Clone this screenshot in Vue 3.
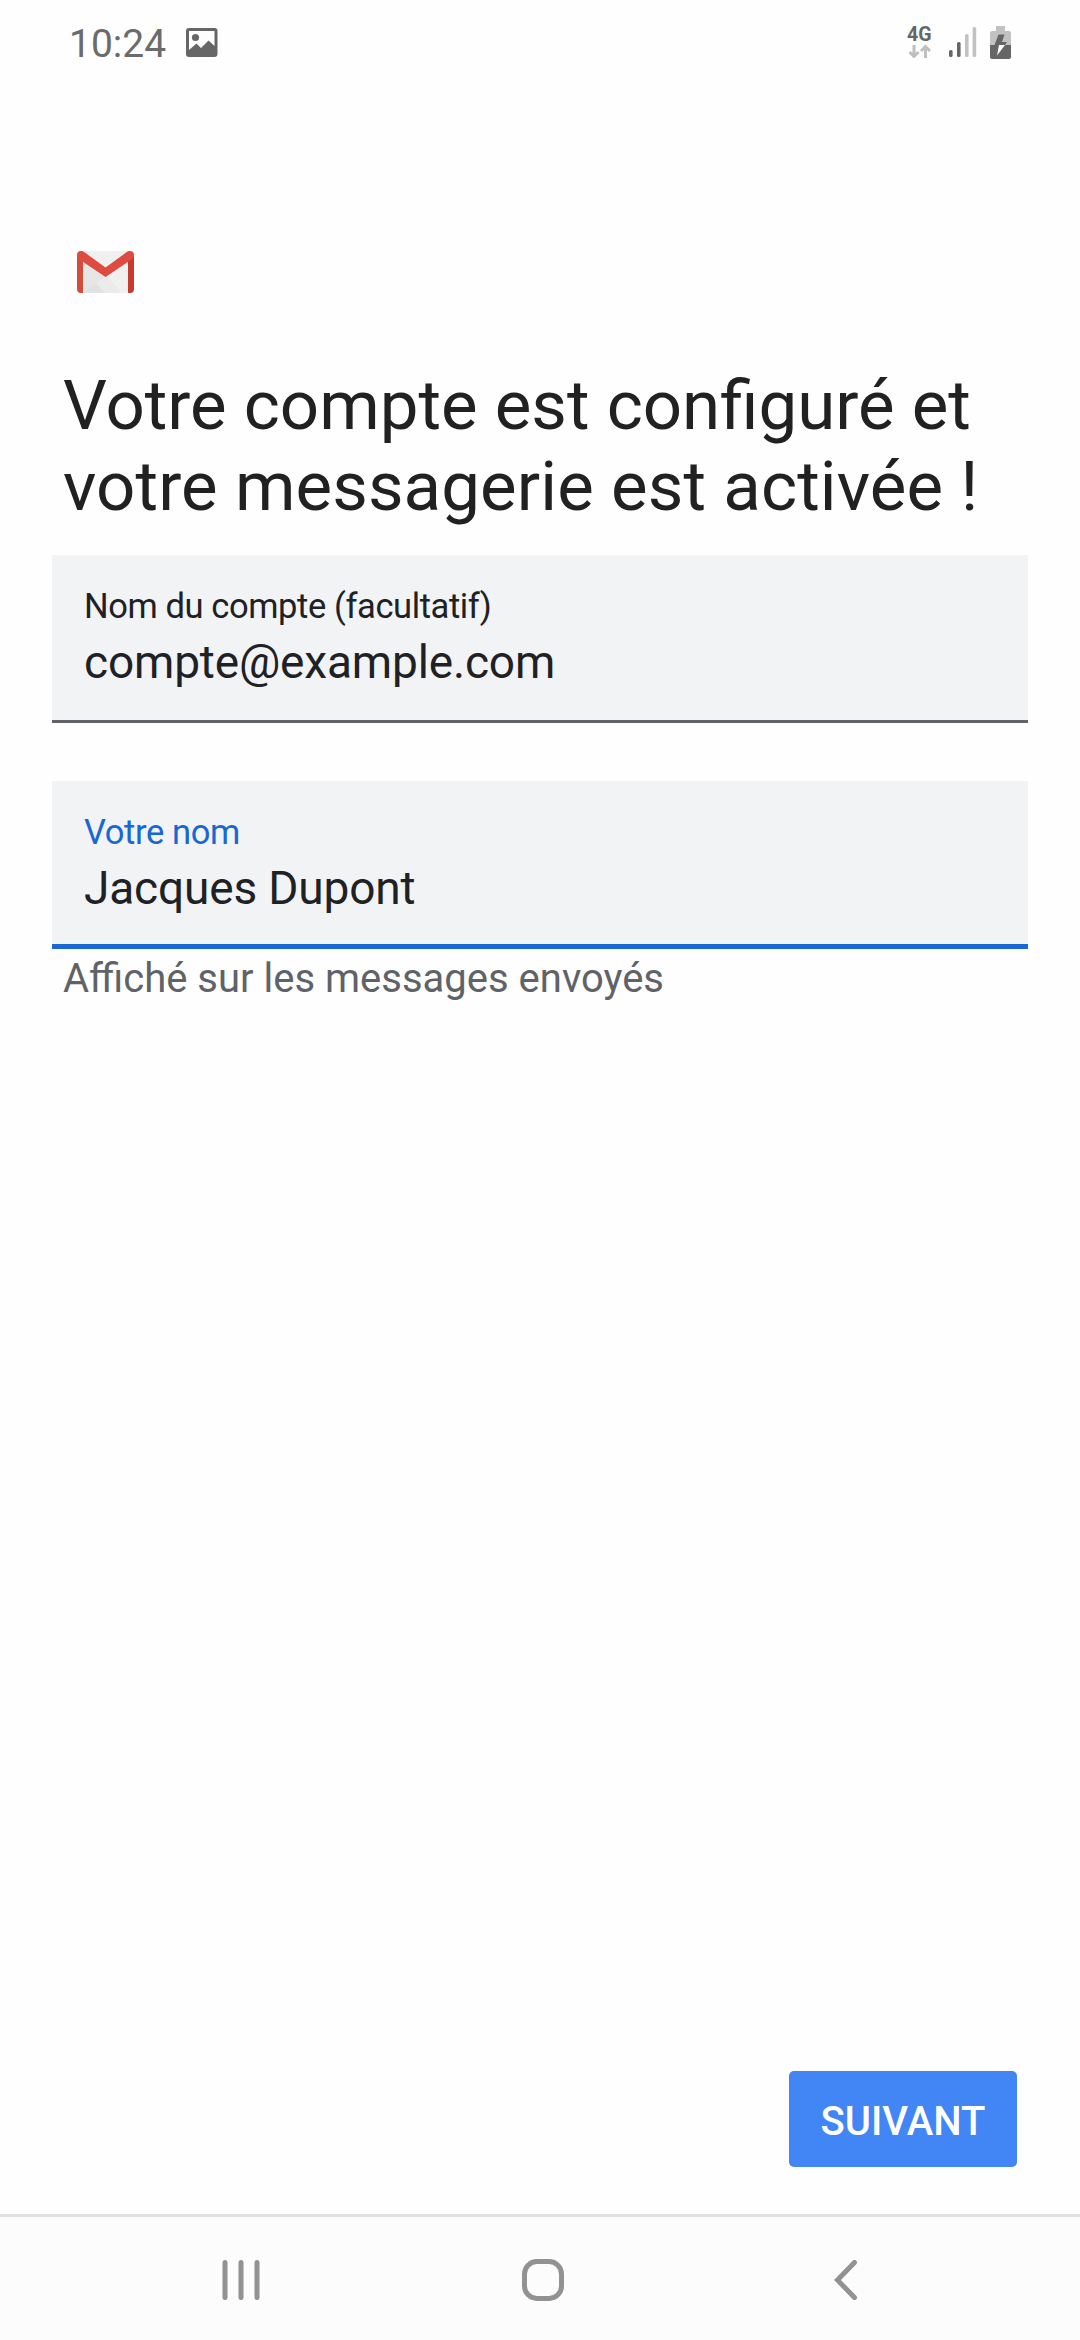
<template>
  <div class="screen">
    <header class="status-bar">
      <span class="time">{{ time }}</span>
      <svg class="picture-icon" viewBox="0 0 32 30">
        <path fill-rule="evenodd" d="M3 0H28.500a3 3 0 0 1 3 3V26a3 3 0 0 1-3 3H3a3 3 0 0 1-3-3V3a3 3 0 0 1 3-3ZM3 3V22L10.500 15.500L15 20L22.500 12.500L28.500 18V3Z" fill="#666" />
        <circle cx="9.500" cy="9.500" r="3.600" fill="#666" />
      </svg>
      <div class="network">
        <span class="network-type">4G</span>
        <svg class="arrows" viewBox="0 0 24 16">
          <path d="M6 1V12M1.500 8L6 12.500L10.500 8M17.500 14V3M13 7L17.500 2.500L22 7" fill="none" stroke="#bfbfbf" stroke-width="3" />
        </svg>
      </div>
      <svg class="signal" viewBox="0 0 28 31">
        <rect
          v-for="(bar, i) in signalBars"
          :key="i"
          :x="bar.x"
          :y="30 - bar.height"
          width="3.600"
          :height="bar.height"
          rx="1.600"
          :fill="bar.on ? '#666' : '#c2c2c2'"
        />
      </svg>
      <svg class="battery" viewBox="0 0 21 33">
        <path d="M6 0H15V5H19a2 2 0 0 1 2 2V19H0V7a2 2 0 0 1 2-2H6Z" fill="#c2c2c2" />
        <path d="M0 19H21V31a2 2 0 0 1-2 2H2a2 2 0 0 1-2-2Z" fill="#666" />
        <path d="M8.500 8.500H14.500L12 16H17L15 19H4.500Z" fill="#666" />
        <path d="M9 19H15L7 29.500Z" fill="#fff" />
      </svg>
    </header>

    <main class="content">
      <svg class="logo" viewBox="0 0 57 43">
        <path d="M5 0H52V42H5Z" fill="#f0f0f0" />
        <path d="M5 42L28.500 26L12 14L5 10Z" fill="#e6e6e6" />
        <path d="M5 42L28.500 25L45 42Z" fill="#ebebeb" />
        <path d="M5 42L19 32L28.500 42Z" fill="#e2e2e2" />
        <path d="M0 4V38a4 4 0 0 0 4 4H6V9Z" fill="#d54b3d" />
        <path d="M57 4V38a4 4 0 0 1-4 4H51V9Z" fill="#c63a30" />
        <path d="M4 0C5.500 0 6.500 0.500 7.500 1.300L28.500 16.500L49.500 1.300C50.500 0.500 51.500 0 53 0a4 4 0 0 1 4 4C57 6 56 7.500 54.500 8.500L28.500 26L2.500 8.500C1 7.500 0 6 0 4a4 4 0 0 1 4-4Z" fill="#de4b40" />
      </svg>

      <h1 class="title">Votre compte est configuré et<br /><span class="second-line">votre messagerie est activée !</span></h1>

      <div class="field">
        <span class="label">Nom du compte (facultatif)</span>
        <span class="value">{{ account }}</span>
      </div>

      <div class="field active">
        <span class="label">Votre nom</span>
        <span class="value">{{ name }}</span>
      </div>
      <p class="helper">Affiché sur les messages envoyés</p>
    </main>

    <div class="actions">
      <button class="btn">SUIVANT</button>
    </div>

    <nav class="nav-bar">
      <svg class="nav-icon" viewBox="0 0 44 44">
        <path d="M6 3.500V38.500M22 3.500V38.500M38 3.500V38.500" />
      </svg>
      <svg class="nav-icon" viewBox="0 0 44 44">
        <rect x="3.500" y="2.500" width="37" height="37" rx="12.500" />
      </svg>
      <svg class="nav-icon" viewBox="0 0 44 44">
        <path d="M31.500 3.500L14.500 21L31.500 38.500" />
      </svg>
    </nav>
  </div>
</template>

<script setup>
import { ref } from 'vue'

const time = ref('10:24')
const account = ref('compte@example.com')
const name = ref('Jacques Dupont')

const signalBars = [
  { x: 0, height: 7, on: true },
  { x: 8, height: 15, on: true },
  { x: 16, height: 23, on: false },
  { x: 23.6, height: 30, on: false },
]
</script>

<style>
body {
  margin: 0;
  background-color: #fefefe;
}
</style>

<style scoped>
* {
  box-sizing: border-box;
}

.screen {
  display: flex;
  flex-direction: column;
  width: 1080px;
  height: 2340px;
  background-color: #fefefe;
  color: #202124;
  font-family: Roboto, 'Noto Sans', sans-serif;
  overflow: hidden;
}

.status-bar {
  display: flex;
  align-items: flex-start;
  height: 84px;
  padding: 26px 69px 0 69px;
}

.time {
  width: 117px;
  margin-top: -4px;
  font-size: 39px;
  line-height: 44px;
  color: #6b6b6b;
}

.picture-icon {
  width: 32px;
  height: 30px;
  margin-top: 2px;
}

.network {
  display: flex;
  flex-direction: column;
  width: 26px;
  margin-left: auto;
  margin-right: 16px;
}

.network-type {
  height: 18px;
  font-size: 19.5px;
  line-height: 17px;
  font-weight: 700;
  color: #666;
}

.arrows {
  width: 24px;
  height: 16px;
  margin-left: 1px;
}

.signal {
  width: 28px;
  height: 31px;
  margin-top: 1px;
  margin-right: 13px;
}

.battery {
  width: 21px;
  height: 33px;
}

.content {
  flex: 1;
  padding: 167px 52px 0;
}

.logo {
  display: block;
  width: 57px;
  height: 43px;
  margin-left: 25px;
}

.title {
  margin: 71px 0 28px 11px;
  font-size: 69px;
  line-height: 81px;
  font-weight: 400;
  white-space: nowrap;
  color: #212121;
}

.second-line {
  letter-spacing: 0.1px;
}

.field {
  display: flex;
  flex-direction: column;
  height: 168px;
  padding: 30px 32px 0;
  background-color: #f1f3f5;
  border-bottom: 3px solid #5f6368;
}

.label {
  font-size: 34.5px;
  line-height: 42px;
  letter-spacing: -0.4px;
}

.value {
  margin-top: 8px;
  font-size: 46px;
  line-height: 54px;
  letter-spacing: -0.16px;
}

.field.active {
  margin-top: 58px;
  border-bottom: 5px solid #1967d2;
}

.active .label {
  color: #1967d2;
}

.helper {
  margin: 6px 0 0 11px;
  font-size: 40px;
  line-height: 48px;
  color: #5f6368;
}

.actions {
  display: flex;
  justify-content: flex-end;
  padding: 0 63px 47px 0;
}

.btn {
  width: 228px;
  height: 96px;
  padding: 4px 0 0;
  background-color: #4285f4;
  color: #fff;
  border: 0;
  border-radius: 5px;
  font-family: inherit;
  font-size: 40px;
  font-weight: 500;
  cursor: pointer;
}

.nav-bar {
  display: flex;
  gap: 258px;
  height: 126px;
  padding: 42px 0 0 219px;
  background-color: #fcfcfc;
  border-top: 3px solid #e0e0e0;
}

.nav-icon {
  width: 44px;
  height: 44px;
  fill: none;
  stroke: #929292;
  stroke-width: 5;
  stroke-linecap: round;
}
</style>
